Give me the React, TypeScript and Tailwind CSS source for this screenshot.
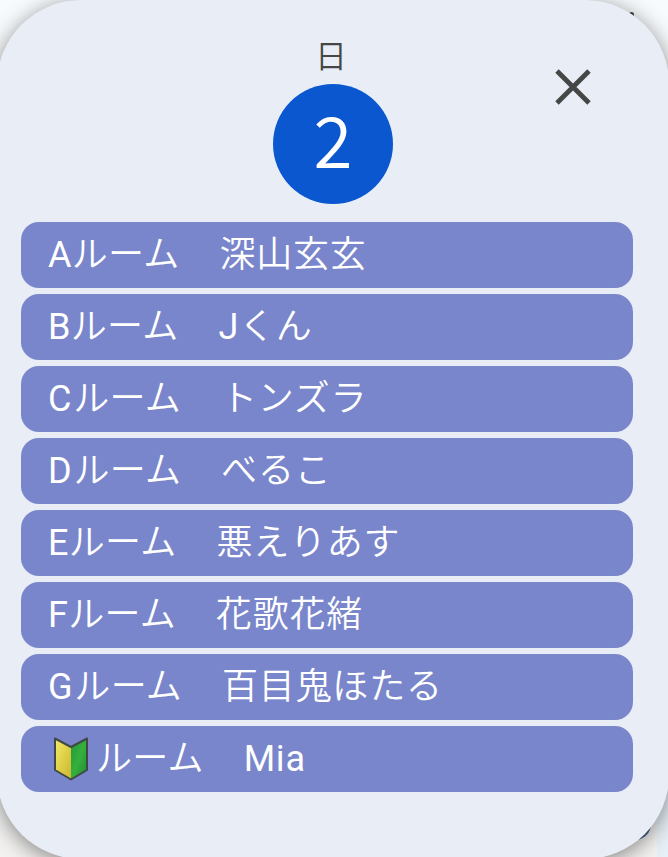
import React from 'react';

interface Room {
  id: string;
  name: string;
  wide?: boolean;
}

const rooms: Room[] = [
  { id: 'A', name: '深山玄玄' },
  { id: 'B', name: 'Jくん' },
  { id: 'C', name: 'トンズラ', wide: true },
  { id: 'D', name: 'べるこ', wide: true },
  { id: 'E', name: '悪えりあす' },
  { id: 'F', name: '花歌花緒' },
  { id: 'G', name: '百目鬼ほたる', wide: true },
  { id: 'beginner', name: 'Mia' },
];

const BeginnerMark: React.FC = () => (
  <svg viewBox="0 0 34 44" className="w-[34px] h-[44px] ml-[6px] mr-[8px] shrink-0">
    <defs>
      <linearGradient id="leafYellow" x1="0" y1="0" x2="1" y2="1">
        <stop offset="0" stopColor="#f5ec6a" />
        <stop offset="0.5" stopColor="#dfd048" />
        <stop offset="1" stopColor="#c9b832" />
      </linearGradient>
      <linearGradient id="leafGreen" x1="0" y1="0" x2="1" y2="1">
        <stop offset="0" stopColor="#23963a" />
        <stop offset="0.5" stopColor="#35b03c" />
        <stop offset="1" stopColor="#1f8a38" />
      </linearGradient>
    </defs>
    <path d="M1 1.5 17 10v32.5L1 33z" fill="url(#leafYellow)" />
    <path d="M33 1.5 17 10v32.5L33 33z" fill="url(#leafGreen)" />
    <path d="M1 1.5 17 10 33 1.5V33L17 42.5 1 33z" fill="none" stroke="#3f4a45" strokeWidth="2" strokeLinejoin="round" />
  </svg>
);

const RoomRow: React.FC<{ room: Room }> = ({ room }) => {
  const latin = room.name.match(/^[A-Za-z]+/)?.[0] ?? '';
  const rest = room.name.slice(latin.length);

  return (
    <li className="h-[66px] rounded-[18px] bg-[#7986cb] pl-[27px] flex items-center text-white text-[36px] font-[350] leading-[66px] tracking-[0.8px] whitespace-pre">
      {room.id === 'beginner' ? (
        <BeginnerMark />
      ) : (
        <span className={room.wide ? 'font-normal mr-px' : 'font-normal -mr-[0.5px]'}>{room.id}</span>
      )}
      <span className="tracking-[0.3px]">ルーム</span>
      <span className="ml-[3px]">
        {'　'}
        {latin && <span className="font-normal">{latin}</span>}
        {rest}
      </span>
    </li>
  );
};

export default function App() {
  return (
    <div className="relative w-[668px] h-[857px] overflow-hidden bg-linear-to-b from-[#f8fbfd] to-[#f3f2f1] font-['Roboto','Noto_Sans_CJK_JP',sans-serif]">
      {/* Calendar behind the sheet */}
      <div className="absolute right-0 bottom-0 w-[11px] h-[120px] bg-[#e8f0f7]" />
      <div className="absolute left-[619px] top-[808px] w-8 h-8 rounded-full bg-[#4a628f]" />
      <div className="absolute left-[629px] top-[12px] w-[5px] h-[5px] rounded-full bg-[#444746]" />

      {/* Day sheet */}
      <main className="relative -ml-[3px] w-[672px] h-[859px] rounded-[84px] bg-[#e8edf6] shadow-[0_4px_22px_rgba(0,0,0,0.45)] pl-6 pr-9">
        <header className="grid grid-cols-[252px_120px_1fr] h-[222px]">
          <div />
          <div className="flex flex-col items-center pt-[36px]">
            <span className="text-[32px] font-[350] leading-[42px] h-[48px] text-[#444746] -translate-x-[2px]">日</span>
            <div className="size-[120px] rounded-full bg-[#0b57d0] text-white text-[71px] font-[350] leading-[107px] text-center font-['Noto_Sans_CJK_JP',sans-serif]">2</div>
          </div>
          <button aria-label="閉じる" className="justify-self-end self-start mt-[69px] mr-[42px]">
            <svg viewBox="0 0 36 36" className="size-9" stroke="#444746" strokeWidth="4.8" fill="none">
              <path d="M2 2l32 32M34 2L2 34" />
            </svg>
          </button>
        </header>
        <ul className="flex flex-col gap-[6px]">
          {rooms.map((room) => (
            <RoomRow key={room.id} room={room} />
          ))}
        </ul>
      </main>
    </div>
  );
}
